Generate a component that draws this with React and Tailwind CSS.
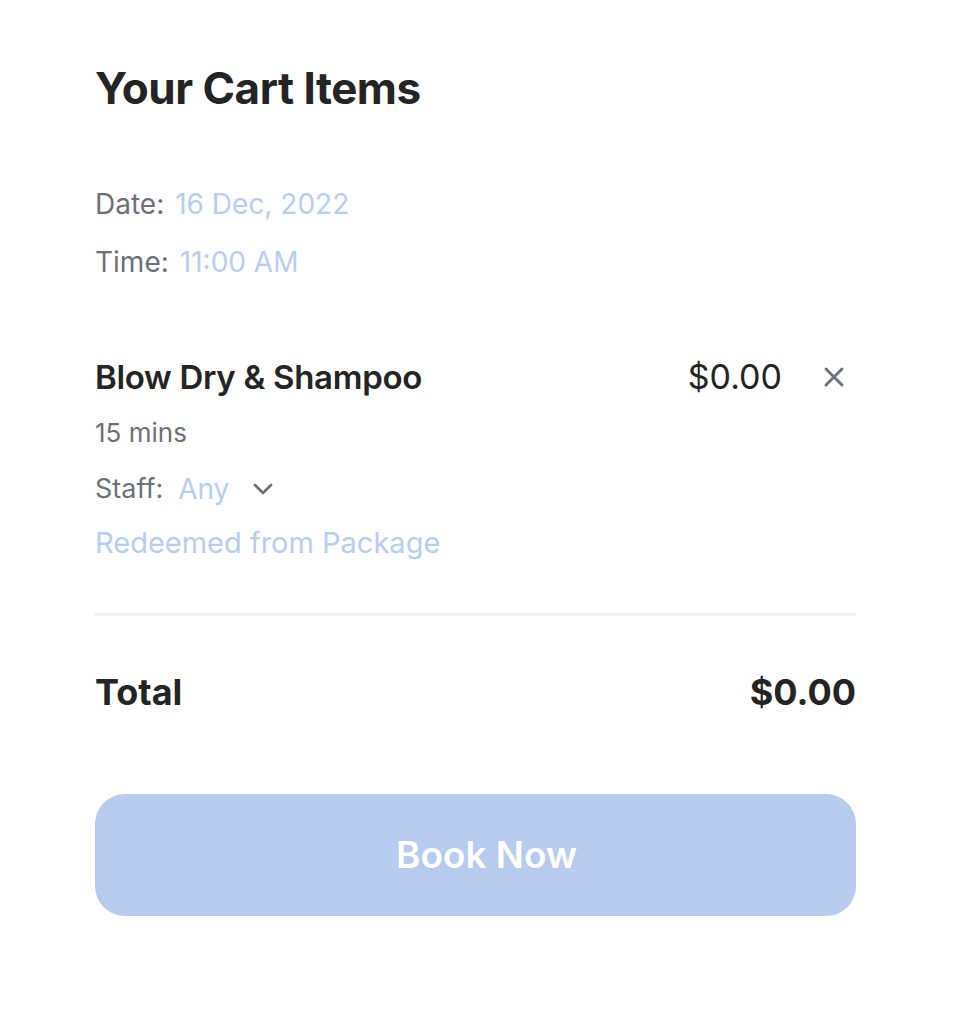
import { X, ChevronDown } from "lucide-react";

export default function App() {
  return (
    <div
      className="min-h-[1014px] w-full bg-white pl-[95px] pr-[114px] pt-[60px]"
      style={{ fontFamily: "Inter, 'Open Sans', sans-serif" }}
    >
      <h1 className="text-[44px] font-bold leading-[56px] tracking-[-0.5px] text-[#242424]">Your Cart Items</h1>

      <div className="mt-[69px] flex flex-col gap-[20px]">
        <div className="flex items-baseline gap-[11px] text-[28px] leading-[38px]">
          <span className="text-[#6c7079]">Date:</span>
          <span className="text-[#b7cdf0]">16 Dec, 2022</span>
        </div>
        <div className="flex items-baseline gap-[11px] text-[28px] leading-[38px]">
          <span className="text-[#6c7079]">Time:</span>
          <span className="text-[#b7cdf0]">11:00 AM</span>
        </div>
      </div>

      <div className="mt-[76px] flex items-start justify-between">
        <div className="flex flex-col">
          <div className="text-[33px] font-semibold leading-[40px] tracking-[-0.3px] text-[#242424]">Blow Dry &amp; Shampoo</div>
          <div className="mt-[18px] text-[26px] leading-[36px] text-[#6c7079]">15 mins</div>
          <div className="mt-[20px] flex items-center text-[27px] leading-[36px]">
            <span className="text-[#6c7079]">Staff:</span>
            <span className="ml-[15px] text-[28px] text-[#b7cdf0]">Any</span>
            <ChevronDown className="ml-[18px] h-[32px] w-[32px] text-[#6c7079]" strokeWidth={2} />
          </div>
          <div className="mt-[17px] text-[29px] leading-[38px] text-[#b7cdf0]">Redeemed from Package</div>
        </div>
        <div className="flex items-center gap-[36px] pr-[6px]">
          <span className="text-[34px] leading-[40px] text-[#242424]">$0.00</span>
          <X className="h-[32px] w-[32px] text-[#6c7079]" strokeWidth={2.2} />
        </div>
      </div>

      <div className="mt-[51px] h-[3px] w-full bg-[#f0f0f0]" />

      <div className="mt-[52px] flex items-center justify-between text-[36px] font-bold leading-[48px] text-[#242424]">
        <span>Total</span>
        <span>$0.00</span>
      </div>

      <button
        type="button"
        className="mt-[78px] flex h-[122px] w-full items-center justify-center rounded-[30px] bg-[#b6cbed] pl-[22px] text-[37px] font-semibold text-white"
      >
        Book Now
      </button>
    </div>
  );
}
